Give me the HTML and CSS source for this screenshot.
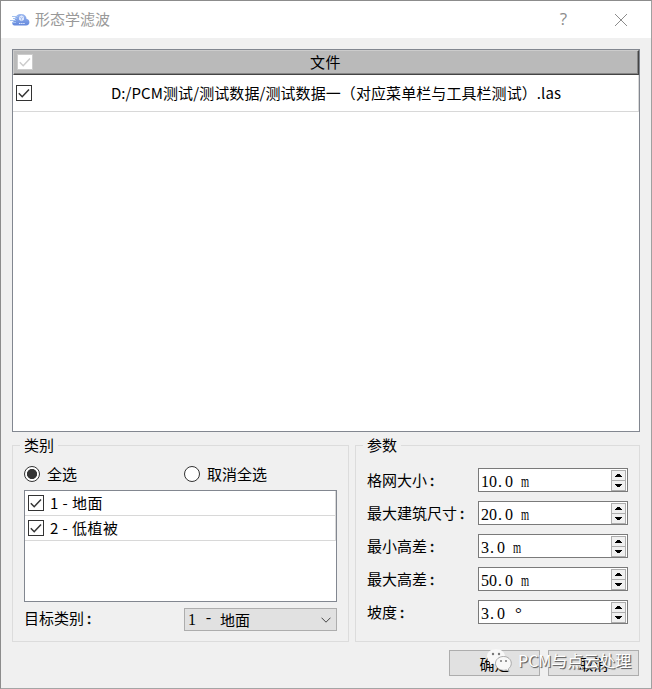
FILE: index.html
```html
<!DOCTYPE html>
<html lang="zh-CN">
<head>
<meta charset="utf-8">
<title>形态学滤波</title>
<link rel="stylesheet" href="styles.css">
</head>
<body>
<svg class="defs" width="0" height="0">
  <symbol id="tick" viewBox="0 0 14 14"><path d="M1.800 7.300 5.200 10.700 12 3.500" fill="none" stroke="currentColor" stroke-width="1.500"/></symbol>
  <symbol id="spin" viewBox="0 0 15 21" shape-rendering="crispEdges">
    <path d="M.5.5h14v20H.5zM.5 10.500h14" fill="#f0f0f0" stroke="#adadad"/>
    <path d="M4 7h7v-1h-1v-1h-1v-1h-3v1h-1v1h-1zM4 14h7v1h-1v1h-1v1h-3v-1h-1v-1h-1z" fill="#000"/>
  </symbol>
</svg>
<div class="window">
  <header class="titlebar">
    <svg class="logo" viewBox="0 0 20 14">
      <defs><linearGradient id="cloud" x2="0" y2="1"><stop offset="0" stop-color="#9db9f0"/><stop offset="1" stop-color="#6488dc"/></linearGradient></defs>
      <path d="M4.500 12.500c-3-.3-3-4 .2-4.700C5 2.500 8 1 11 1c3.600 0 5.500 2 5.600 5 3.700.4 4 6-.6 6.500z" fill="url(#cloud)"/>
      <path d="M2 3.500h6M3 5.500h4M0 7.500h6M2 9.500h4" stroke="#a4c2f0"/>
      <path d="M11.500 2.300 14 3.700v3L11.500 8.200 9 6.700v-3z" fill="#dfe8fc"/>
      <path d="M9.500 4l2 1.200 2-1.200M11.500 5.200v2.500" stroke="#89a8e8" fill="none" stroke-width=".6"/>
      <path d="M9 10.500h6" stroke="#dfe8fc" stroke-dasharray="1.500 .6"/>
    </svg>
    <h1>形态学滤波</h1>
    <span class="help">?</span>
    <svg class="close" viewBox="0 0 14 14"><path d="M1 1l12 12M13 1 1 13" stroke="#8c8c8c" fill="none"/></svg>
  </header>

  <main>
    <section class="files">
      <div class="files-head"><svg class="check off"><use href="#tick"/></svg><span>文件</span></div>
      <div class="files-row"><svg class="check"><use href="#tick"/></svg><span>D:/PCM测试/测试数据/测试数据一（对应菜单栏与工具栏测试）.las</span></div>
    </section>

    <div class="groups">
      <section class="group classes">
        <h2>类别</h2>
        <div class="radios">
          <span class="radio"><i class="dot on"></i>全选</span>
          <span class="radio"><i class="dot"></i>取消全选</span>
        </div>
        <div class="list">
          <div class="item"><svg class="check"><use href="#tick"/></svg><span>1 - 地面</span></div>
          <div class="item"><svg class="check"><use href="#tick"/></svg><span>2 - 低植被</span></div>
        </div>
        <div class="target">
          <span>目标类别<b>:</b></span>
          <div class="combo"><span class="num">1</span><span class="dash">-</span><span>地面</span><svg viewBox="0 0 10 6"><path d="M.5.700 5 5.200 9.500.700" fill="none" stroke="#444"/></svg></div>
        </div>
      </section>

      <section class="group params">
        <h2>参数</h2>
        <div class="param"><label>格网大小<b>:</b></label><div class="spin"><span>10<i>.</i>0 <em>m</em></span><svg><use href="#spin"/></svg></div></div>
        <div class="param"><label>最大建筑尺寸<b>:</b></label><div class="spin"><span>20<i>.</i>0 <em>m</em></span><svg><use href="#spin"/></svg></div></div>
        <div class="param"><label>最小高差<b>:</b></label><div class="spin"><span>3<i>.</i>0 <em>m</em></span><svg><use href="#spin"/></svg></div></div>
        <div class="param"><label>最大高差<b>:</b></label><div class="spin"><span>50<i>.</i>0 <em>m</em></span><svg><use href="#spin"/></svg></div></div>
        <div class="param"><label>坡度<b>:</b></label><div class="spin"><span>3<i>.</i>0 <strong>°</strong></span><svg><use href="#spin"/></svg></div></div>
      </section>
    </div>

    <footer>
      <div class="button">确定</div>
      <div class="button">取消</div>
    </footer>
  </main>
  <div class="watermark">
    <svg viewBox="0 0 26 26">
      <path d="M10 1C4.500 1 1 4.300 1 8.500c0 2.500 1.300 4.500 3.300 5.900L3.500 17.500l3.300-1.800c1 .3 2 .4 3.200.4 5.200 0 9-3.300 9-7.600S15.200 1 10 1z" fill="#f8f8f8"/>
      <path d="M17.500 8.500c-4.500 0-8 3-8 6.800s3.500 7 8 7c1 0 1.900-.1 2.700-.4l2.800 1.600-.7-2.600c1.800-1.300 3-3.300 3-5.600 0-3.800-3.400-6.800-7.800-6.800z" fill="#f8f8f8" stroke="#999" stroke-width=".8"/>
      <g fill="#777"><circle cx="7" cy="6" r="1.200"/><circle cx="13" cy="6" r="1.200"/><circle cx="15" cy="13" r="1"/><circle cx="20" cy="13" r="1"/></g>
    </svg>
    <span>PCM与点云处理</span>
  </div>
</div>
</body>
</html>
```
FILE: styles.css
```css
* { box-sizing: border-box; }
body { margin: 0; }
.defs { display: block; }
.window {
  position: relative;
  width: 652px;
  height: 689px;
  border: 1px solid #8c8c8c;
  border-right-color: #a0a0a0;
  border-bottom-color: #a5a5a5;
  background: #f0f0f0;
  overflow: hidden;
  color: #000;
  font: 15px/20px "Noto Sans CJK SC", sans-serif;
}
h1, h2 { margin: 0; font-size: 15px; font-weight: 400; }
i, em, b, strong { font-style: normal; font-weight: 400; }

.titlebar {
  display: flex;
  align-items: center;
  height: 37px;
  padding: 0 23px 0 9px;
  background: #fff;
  color: #999;
}
.logo { width: 20px; height: 14px; margin-right: 5px; }
.titlebar h1 { flex: 1; margin-top: -1px; }
.help { margin: -2px 47px 0 0; font: 17px/20px "Open Sans", sans-serif; color: #8c8c8c; }
.close { width: 14px; height: 14px; }

main { padding: 11px 11px 0; }
.files { height: 383px; border: 1px solid #828790; background: #fff; }
.files-head, .files-row { display: flex; align-items: center; }
.files-head span, .files-row span { flex: 1; text-align: center; white-space: nowrap; }
.files-head {
  height: 25px;
  padding: 0 20px 2px 3px;
  border: 1px solid;
  border-color: #ccc #444 #444 #ccc;
  box-shadow: inset -1px -1px #858585;
  background: #bababa;
}
.files-head span { letter-spacing: .5px; }
.files-row { height: 37px; padding-left: 3px; border-bottom: 1px solid #d8d8d8; border-right: 1px solid #d8d8d8; }
.files-row span { padding-left: 2px; letter-spacing: .08px; }
.check { flex: none; width: 16px; height: 16px; border: 1px solid #333; background: #fff; color: #333; }
.check.off { border-color: #ccc; color: #ccc; }

.groups { display: flex; gap: 6px; margin-top: 13px; }
.group { height: 197px; border: 1px solid #dcdcdc; padding: 0 11px; }
.group h2 { width: max-content; height: 20px; margin: -11px 0 0 -4px; padding: 0 4px; background: #f0f0f0; }
.classes { width: 337px; }
.params { width: 285px; }
.radios { display: grid; grid-template-columns: 160px 1fr; margin-top: 9px; }
.radio { display: flex; align-items: center; }
.dot { width: 16px; height: 16px; margin-right: 7px; border: 1px solid #333; border-radius: 50%; background: #fff; }
.dot.on { background: radial-gradient(circle, #333 4.700px, #fff 5.400px); }
.list { height: 112px; margin-top: 6px; border: 1px solid #828790; background: #fff; }
.item { display: flex; align-items: center; gap: 6px; height: 25px; padding-left: 3px; border-bottom: 1px solid #d8d8d8; border-right: 1px solid #d8d8d8; }
.item span { white-space: nowrap; letter-spacing: .45px; }
.target { display: flex; justify-content: space-between; margin-top: 6px; }
.target b, .param b { padding-left: 3px; -webkit-text-stroke: .4px #000; }
.combo { display: flex; align-items: center; width: 153px; height: 23px; padding: 0 5px 0 3px; border: 1px solid #adadad; background: #e1e1e1; }
.combo svg { width: 10px; height: 6px; margin-left: auto; }
.num { width: 16px; font-family: "Liberation Serif", serif; font-size: 16px; }
.dash { width: 16px; font-family: "Liberation Mono", monospace; }

.params h2 { margin-bottom: 13px; }
.param { display: flex; align-items: center; justify-content: space-between; height: 24px; margin-bottom: 9px; }
.spin { display: flex; align-items: center; justify-content: space-between; width: 150px; height: 24px; padding: 0 1px 0 2px; border: 1px solid #7a7a7a; background: #fff; }
.spin span { padding-top: 3px; font: 16px/22px "Liberation Serif", serif; white-space: pre; word-spacing: 4px; }
.spin i { padding: 0 3px 0 1px; }
.spin em { display: inline-block; transform: scaleX(.65); transform-origin: left; }
.spin strong { padding-left: 2px; font-size: 17px; }
.spin svg { width: 15px; height: 21px; }

footer { display: flex; justify-content: flex-end; gap: 8px; margin-top: 8px; padding-right: 1px; }
.button { width: 91px; height: 26px; border: 1px solid #adadad; background: #e1e1e1; line-height: 25px; text-align: center; }

.watermark { position: absolute; left: 485px; top: 647px; display: flex; align-items: center; color: #fff; font-size: 16px; line-height: 24px; white-space: nowrap; }
.watermark svg { width: 26px; height: 26px; margin-right: 6px; }
.watermark span { margin-top: -3px; text-shadow: 1px 1px 1px #666, 1px 1px 0 #888; }
```
